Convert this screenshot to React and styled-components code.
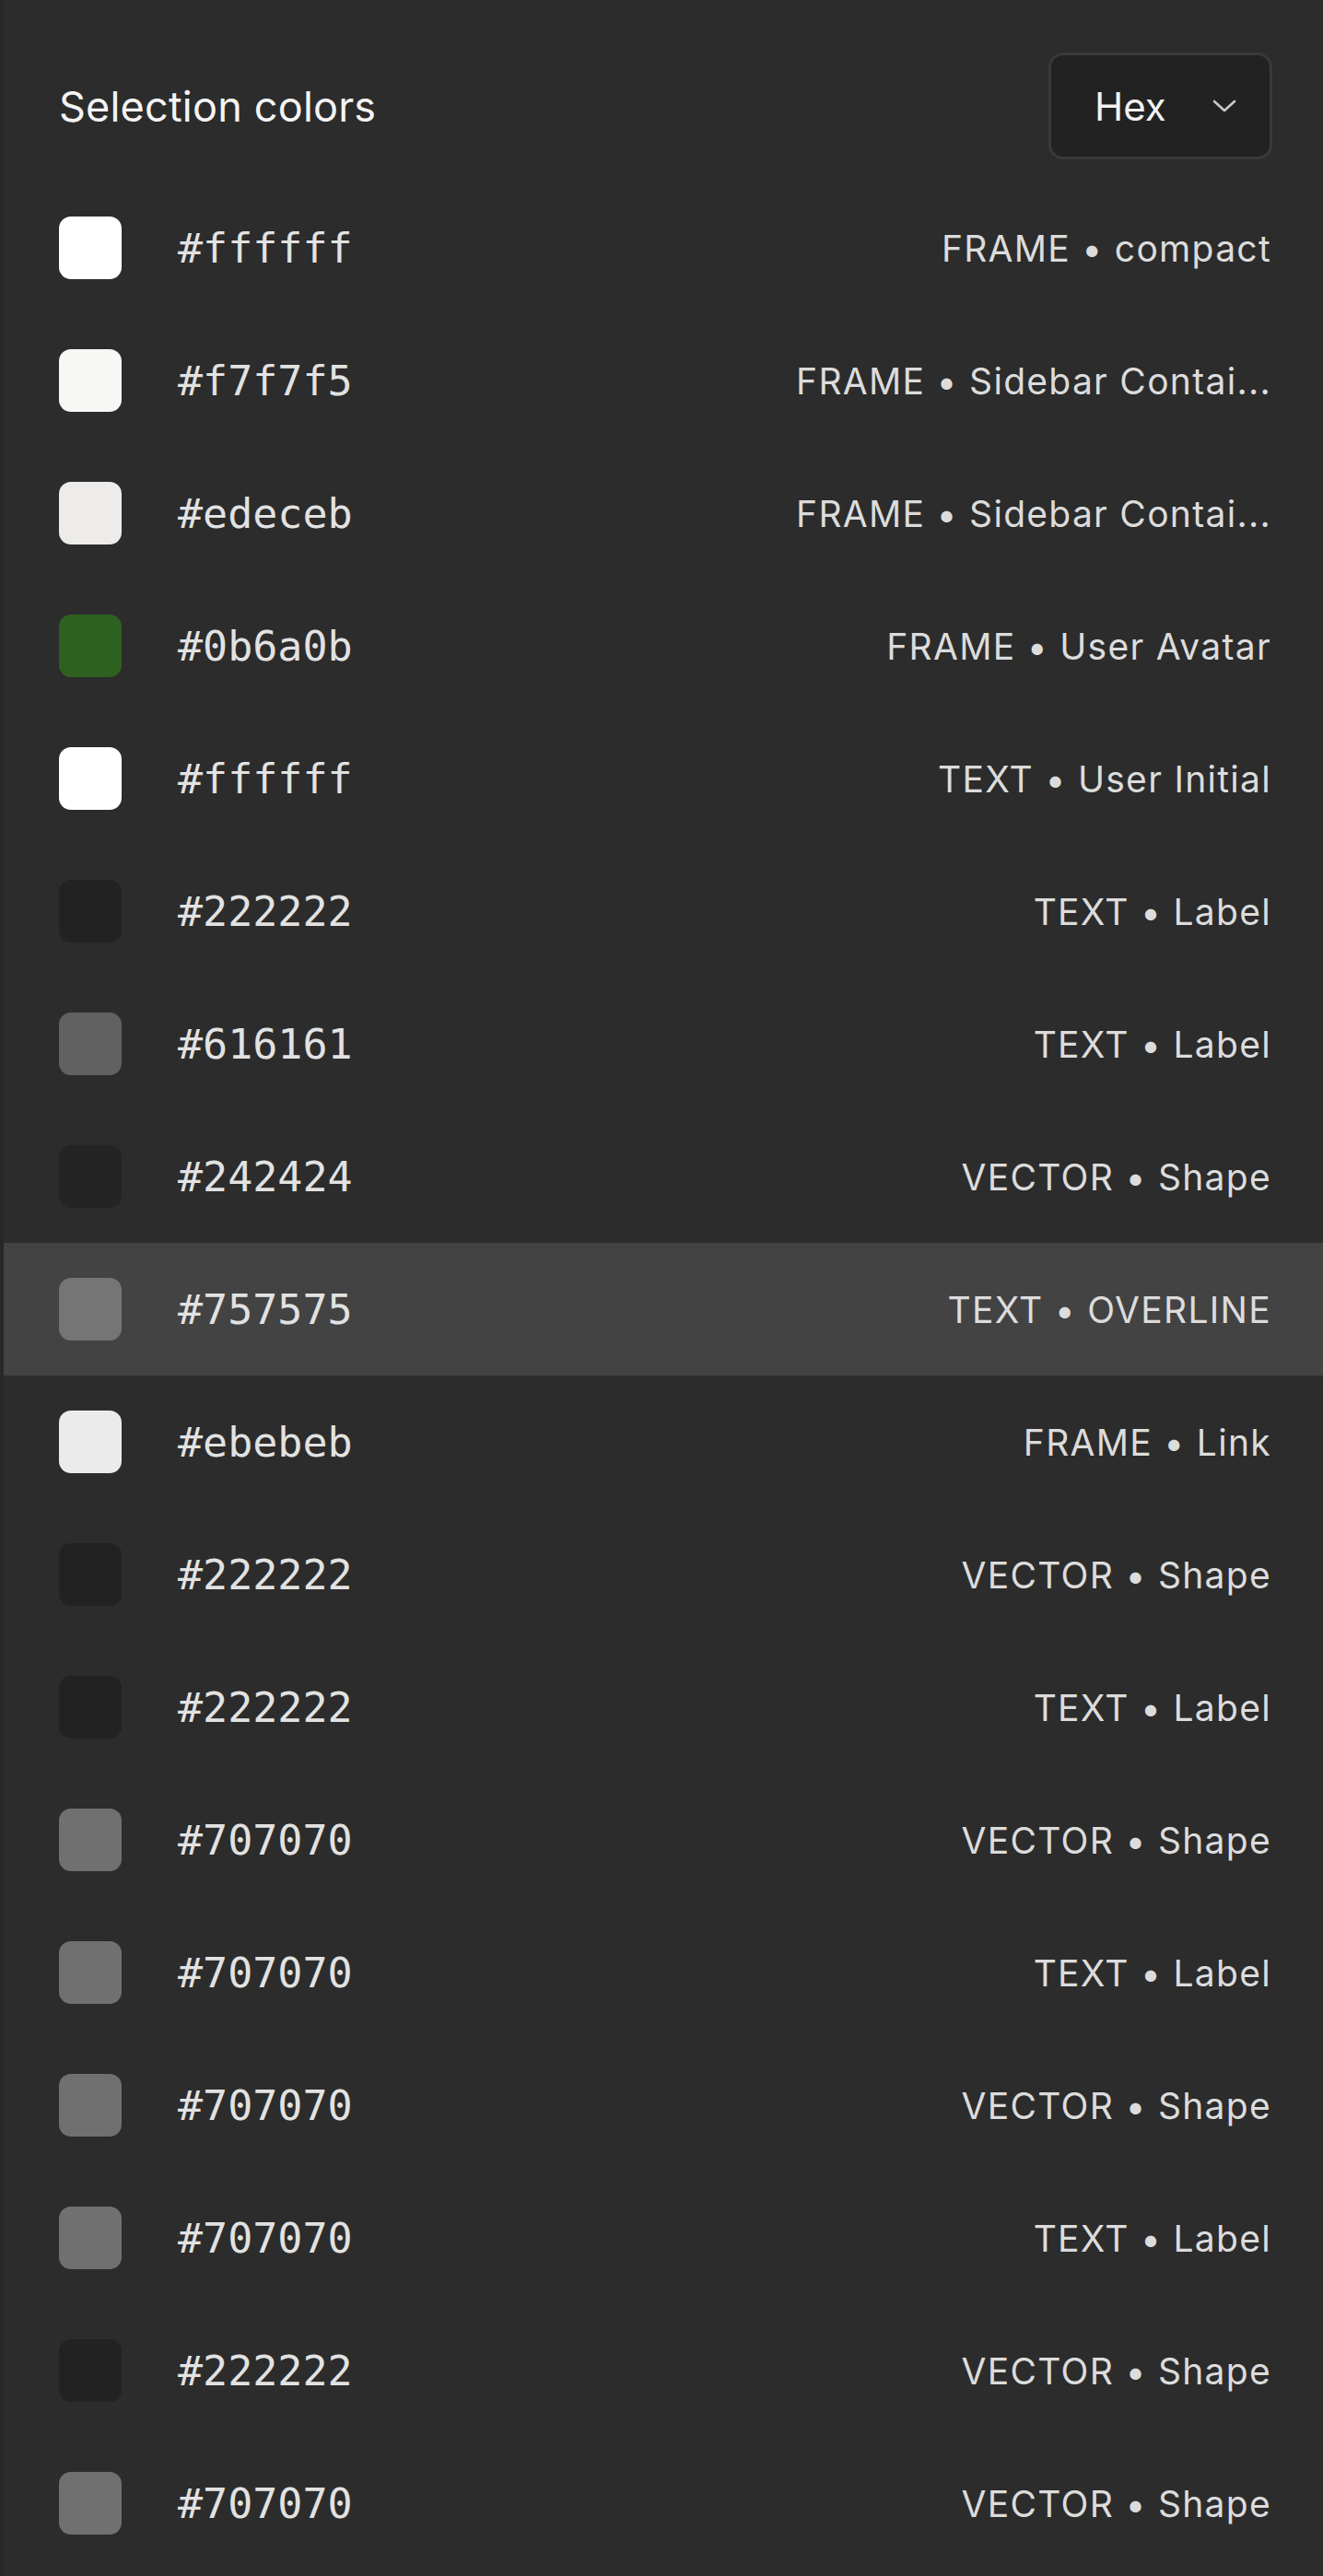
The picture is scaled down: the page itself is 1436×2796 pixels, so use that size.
import React from 'react';
import styled, {createGlobalStyle} from 'styled-components';

const GlobalStyle = createGlobalStyle`
    html, body {
        margin: 0;
        padding: 0;
        background: #2c2c2c;
    }
    body {
        font-family: Inter, "Noto Sans", sans-serif;
        -webkit-font-smoothing: antialiased;
    }
`

// swatch is the colour as it shows on screen (display profile), hex is the value
const colors = [
    {hex: '#ffffff', type: 'FRAME', name: 'compact'},
    {hex: '#f7f7f5', type: 'FRAME', name: 'Sidebar Contai...'},
    {hex: '#edeceb', type: 'FRAME', name: 'Sidebar Contai...'},
    {hex: '#0b6a0b', swatch: '#2e601f', type: 'FRAME', name: 'User Avatar'},
    {hex: '#ffffff', type: 'TEXT', name: 'User Initial'},
    {hex: '#222222', type: 'TEXT', name: 'Label'},
    {hex: '#616161', type: 'TEXT', name: 'Label'},
    {hex: '#242424', type: 'VECTOR', name: 'Shape'},
    {hex: '#757575', type: 'TEXT', name: 'OVERLINE', active: true},
    {hex: '#ebebeb', type: 'FRAME', name: 'Link'},
    {hex: '#222222', type: 'VECTOR', name: 'Shape'},
    {hex: '#222222', type: 'TEXT', name: 'Label'},
    {hex: '#707070', type: 'VECTOR', name: 'Shape'},
    {hex: '#707070', type: 'TEXT', name: 'Label'},
    {hex: '#707070', type: 'VECTOR', name: 'Shape'},
    {hex: '#707070', type: 'TEXT', name: 'Label'},
    {hex: '#222222', type: 'VECTOR', name: 'Shape'},
    {hex: '#707070', type: 'VECTOR', name: 'Shape'},
];

export default function App() {
    return (
        <>
            <GlobalStyle/>
            <Panel>
                <Header>
                    <Title>Selection colors</Title>
                    <FormatSelect>
                        <span>Hex</span>
                        <svg width="26" height="14" viewBox="0 0 26 14" fill="none">
                            <path d="M2 2 L13 12 L24 2" stroke="#c8c8c8" strokeWidth="2.6"
                                  strokeLinecap="round" strokeLinejoin="round"/>
                        </svg>
                    </FormatSelect>
                </Header>
                <List>
                    {colors.map((color, index) => (
                        <Row key={index} active={color.active}>
                            <Swatch color={color.swatch || color.hex}/>
                            <HexValue>{color.hex}</HexValue>
                            <Layer>{color.type} • {color.name}</Layer>
                        </Row>
                    ))}
                </List>
            </Panel>
        </>
    )
}

const Panel = styled.div`
    min-height: 2796px;
    background: #2c2c2c;
    border-left: 4px solid #282828;
    box-sizing: border-box;
`

const Header = styled.div`
    display: flex;
    align-items: center;
    justify-content: space-between;
    height: 197px;
    padding: 57px 55px 24px 60px;
    box-sizing: border-box;
`

const Title = styled.h1`
    margin: 0;
    font-size: 45px;
    font-weight: 400;
    color: #f4f4f4;
    letter-spacing: 0.2px;
`

const FormatSelect = styled.div`
    display: flex;
    align-items: center;
    justify-content: space-between;
    width: 243px;
    height: 116px;
    padding: 0 36px 0 47px;
    box-sizing: border-box;
    background: #222222;
    border: 3px solid #3a3a3a;
    border-radius: 16px;
    font-size: 42px;
    color: #f2f2f2;
`

const List = styled.div`
    display: flex;
    flex-direction: column;
`

const Row = styled.div`
    display: flex;
    align-items: center;
    height: 144px;
    padding: 0 56px 0 60px;
    background: ${props => props.active ? '#434343' : 'transparent'};
`

const Swatch = styled.div`
    width: 68px;
    height: 68px;
    flex-shrink: 0;
    border-radius: 13px;
    background: ${props => props.color};
`

const HexValue = styled.span`
    margin-left: 61px;
    font-family: "DejaVu Sans Mono", "Liberation Mono", monospace;
    font-size: 45px;
    color: #e2e2e2;
`

const Layer = styled.span`
    margin-left: auto;
    white-space: nowrap;
    font-size: 39px;
    letter-spacing: 1.3px;
    color: #dcdcdc;
`
